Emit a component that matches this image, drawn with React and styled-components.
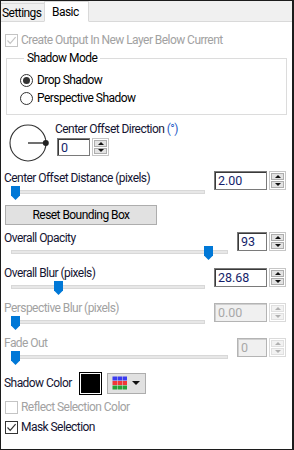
import React from "react";
import styled, { createGlobalStyle } from "styled-components";

const Global = createGlobalStyle`
  html, body { margin: 0; padding: 0; background: #ffffff; }
  * { box-sizing: border-box; }
`;

const FONT = `Roboto, "Liberation Sans", Arial, sans-serif`;
const TEXT = "#141432";
const DIS = "#a2a2a2";

const Window = styled.div`
  width: 294px;
  height: 450px;
  border: 1px solid #1c1c1c;
  border-right-width: 2px;
  background: #ffffff;
  font-family: ${FONT};
  font-size: 12px;
  letter-spacing: -0.55px;
  color: ${TEXT};
  display: flex;
  flex-direction: column;
  overflow: hidden;
`;

const TabBar = styled.div`
  height: 21px;
  flex: none;
  background: #f0f0f0;
  border-bottom: 1px solid #d9d9d9;
  display: flex;
  align-items: flex-end;
`;

const Tab = styled.div`
  height: ${(p) => (p.$active ? "21px" : "19px")};
  margin-bottom: -1px;
  padding: ${(p) => (p.$active ? "0 0 0 7px" : "0 0 0 1px")};
  width: ${(p) => p.$w}px;
  background: ${(p) => (p.$active ? "#ffffff" : "#f0f0f0")};
  border: 1px solid #d9d9d9;
  border-bottom: ${(p) => (p.$active ? "1px solid #ffffff" : "1px solid #d9d9d9")};
  border-left-width: ${(p) => (p.$active ? "1px" : "0")};
  margin-left: ${(p) => (p.$active ? "-1px" : "0")};
  display: flex;
  align-items: ${(p) => (p.$active ? "flex-start" : "center")};
  padding-top: ${(p) => (p.$active ? "3px" : "1px")};
  color: #000;
  white-space: nowrap;
`;

const Content = styled.div`
  flex: 1;
  padding: 0 6px 0 3px;
  display: flex;
  flex-direction: column;
`;

const CheckRow = styled.div`
  height: 16px;
  margin-top: ${(p) => p.$mt || 0}px;
  display: flex;
  align-items: center;
  gap: 3px;
  padding-left: 1px;
  color: ${(p) => (p.$disabled ? DIS : TEXT)};
`;

const Box = styled.span`
  width: 13px;
  height: 13px;
  border: 1px solid ${(p) => (p.$disabled ? "#c4c4c4" : "#333333")};
  background: #fff;
  display: flex;
  align-items: center;
  justify-content: center;
  flex: none;
`;

const Check = ({ checked, disabled }) => (
  <Box $disabled={disabled}>
    {checked && (
      <svg width="11" height="11" viewBox="0 0 11 11">
        <path
          d="M1.5 5.5 L4.2 8.3 L9.6 2.2"
          fill="none"
          stroke={disabled ? "#c4c4c4" : "#333"}
          strokeWidth="1.2"
        />
      </svg>
    )}
  </Box>
);

const Group = styled.fieldset`
  margin: 3px 0 0 2px;
  width: 281px;
  border: 1px solid #dcdcdc;
  padding: 6px 0 7px 13px;
  display: flex;
  flex-direction: column;
`;

const Legend = styled.legend`
  padding: 0 3px;
  margin-left: 4px;
  line-height: 14px;
  color: #000;
`;

const RadioRow = styled.div`
  height: 18px;
  display: flex;
  align-items: center;
  gap: 4px;
  color: #000;
`;

const RadioCircle = styled.span`
  width: 13px;
  height: 13px;
  border-radius: 50%;
  border: 1px solid #333;
  display: flex;
  align-items: center;
  justify-content: center;
  &::after {
    content: "";
    width: 7px;
    height: 7px;
    border-radius: 50%;
    background: ${(p) => (p.$on ? "#333" : "transparent")};
  }
`;

const DialRow = styled.div`
  margin-top: 7px;
  display: flex;
  align-items: flex-start;
  gap: 6px;
`;

const DialCol = styled.div`
  display: flex;
  flex-direction: column;
  gap: 2px;
`;

const Label = styled.div`
  line-height: 14px;
  height: 14px;
  white-space: nowrap;
  color: ${(p) => (p.$disabled ? DIS : TEXT)};
  grid-column: 1;
  grid-row: 1;
`;

const Blue = styled.span`
  color: #1e5bc6;
`;

const SpinWrap = styled.div`
  display: flex;
  align-items: stretch;
  gap: 2px;
  height: ${(p) => p.$h || 19}px;
  margin-top: ${(p) => p.$mt || 0}px;
  margin-left: ${(p) => p.$ml || 0}px;
  grid-column: 2;
  grid-row: 1 / span 2;
  align-self: start;
`;

const SpinField = styled.div`
  width: ${(p) => p.$w}px;
  border: 1px solid ${(p) => (p.$disabled ? "#b4b4b4" : "#7a7a7a")};
  box-shadow: inset 1px 1px 0 ${(p) => (p.$disabled ? "#cfcfcf" : "#3a3a3a")};
  background: ${(p) => (p.$disabled ? "#f0f0f0" : "#ffffff")};
  color: ${(p) => (p.$disabled ? "#a8a8a8" : "#141e6a")};
  font-size: 12.5px;
  letter-spacing: 0;
  padding-left: 3px;
  display: flex;
  align-items: center;
`;

const SpinBtns = styled.div`
  width: 17px;
  border: 1px solid ${(p) => (p.$disabled ? "#dadada" : "#c6c6c6")};
  display: flex;
  flex-direction: column;
  gap: 1px;
  padding: 1px;
`;

const SpinBtn = styled.div`
  flex: 1;
  background: ${(p) => (p.$disabled ? "#f2f2f2" : "#e3e3e3")};
  border: 1px solid ${(p) => (p.$disabled ? "#e0e0e0" : "#adadad")};
  display: flex;
  align-items: center;
  justify-content: center;
  &::after {
    content: "";
    border-left: 3px solid transparent;
    border-right: 3px solid transparent;
    ${(p) => (p.$up ? "border-bottom" : "border-top")}: 3px solid ${(p) =>
      p.$disabled ? "#b0b0b0" : "#111"};
  }
`;

const Spin = ({ value, w, disabled, h, mt, ml }) => (
  <SpinWrap $h={h} $mt={mt} $ml={ml}>
    <SpinField $w={w} $disabled={disabled}>
      {value}
    </SpinField>
    <SpinBtns $disabled={disabled}>
      <SpinBtn $up $disabled={disabled} />
      <SpinBtn $disabled={disabled} />
    </SpinBtns>
  </SpinWrap>
);

const Section = styled.div`
  display: grid;
  grid-template-columns: 1fr auto;
  grid-template-rows: 14px 16px;
  column-gap: 9px;
  height: ${(p) => p.$h || 35}px;
  margin-top: ${(p) => p.$mt || 0}px;
`;

const SliderArea = styled.div`
  grid-column: 1;
  grid-row: 2;
  margin-left: 7px;
  position: relative;
  height: 16px;
`;

const Track = styled.div`
  margin-top: 5px;
  height: 4px;
  background: #e7e7e7;
  border: 1px solid #d8d8d8;
`;

const Thumb = styled.svg`
  position: absolute;
  top: 1px;
`;

const Slider = ({ frac }) => (
  <SliderArea>
    <Track />
    <Thumb
      width="10"
      height="15"
      viewBox="0 0 10 15"
      style={{ left: `calc((100% - 9px) * ${frac})` }}
    >
      <polygon points="0,0 9,0 9,9.5 4.5,14 0,9.5" fill="#0078d7" />
    </Thumb>
  </SliderArea>
);

const Button = styled.div`
  margin: 4px 0 0 1px;
  width: 152px;
  height: 20px;
  background: #e1e1e1;
  border: 1px solid #adadad;
  display: flex;
  align-items: center;
  justify-content: center;
  color: #000;
`;

const ColorRow = styled.div`
  height: 24px;
  display: flex;
  align-items: center;
`;

const Swatch = styled.div`
  margin-left: 7px;
  width: 23px;
  height: 23px;
  border: 1px solid #000;
  padding: 1px;
  background: #fff;
  &::after {
    content: "";
    display: block;
    width: 100%;
    height: 100%;
    background: #000;
  }
`;

const PaletteBtn = styled.div`
  margin-left: 5px;
  width: 39px;
  height: 21px;
  background: #e1e1e1;
  border: 1px solid #adadad;
  display: flex;
  align-items: center;
  padding-left: 4px;
  gap: 4px;
`;

const Palette = () => (
  <svg width="16" height="14" viewBox="0 0 16 14">
    {[0, 1, 2].map((r) =>
      [0, 1, 2].map((c) => (
        <rect
          key={`${r}${c}`}
          x={c * 5 + 0.5}
          y={r * 4.5 + 0.5}
          width="4.5"
          height="4"
          fill={["#3b3bf0", "#f03838", "#26a336"][r]}
        />
      ))
    )}
  </svg>
);

const Caret = styled.span`
  border-left: 4px solid transparent;
  border-right: 4px solid transparent;
  border-top: 4px solid #111;
`;

export default function App() {
  return (
    <>
      <Global />
      <Window>
        <TabBar>
          <Tab $w={44}>Settings</Tab>
          <Tab $active $w={45}>Basic</Tab>
        </TabBar>
        <Content>
          <CheckRow $mt={10} $disabled>
            <Check checked disabled />
            Create Output In New Layer Below Current
          </CheckRow>
          <Group>
            <Legend>Shadow Mode</Legend>
            <RadioRow>
              <RadioCircle $on />
              Drop Shadow
            </RadioRow>
            <RadioRow>
              <RadioCircle />
              Perspective Shadow
            </RadioRow>
          </Group>
          <DialRow>
            <svg width="42" height="42" viewBox="0 0 42 42" style={{ marginLeft: 3 }}>
              <circle cx="21" cy="21" r="18" fill="none" stroke="#333" strokeWidth="1.1" />
              <line x1="21" y1="21" x2="39" y2="21" stroke="#333" strokeWidth="1.4" />
              <circle cx="38.8" cy="21" r="3" fill="#222" />
            </svg>
            <DialCol>
              <Label>
                Center Offset Direction <Blue>(°)</Blue>
              </Label>
              <Spin value="0" w={33} h={18} ml={2} />
            </DialCol>
          </DialRow>
          <Section $mt={7} $h={30}>
            <Label>Center Offset Distance (pixels)</Label>
            <Spin value="2.00" w={53} />
            <Slider frac={0} />
          </Section>
          <Button>Reset Bounding Box</Button>
          <Section $mt={6}>
            <Label>Overall Opacity</Label>
            <Spin value="93" w={30} mt={1} />
            <Slider frac={0.93} />
          </Section>
          <Section>
            <Label>Overall Blur (pixels)</Label>
            <Spin value="28.68" w={53} mt={2} />
            <Slider frac={0.23} />
          </Section>
          <Section>
            <Label $disabled>Perspective Blur (pixels)</Label>
            <Spin value="0.00" w={53} mt={2} disabled />
            <Slider frac={0} />
          </Section>
          <Section>
            <Label $disabled>Fade Out</Label>
            <Spin value="0" w={30} mt={2} disabled />
            <Slider frac={0} />
          </Section>
          <ColorRow>
            <Label>Shadow Color</Label>
            <Swatch />
            <PaletteBtn>
              <Palette />
              <Caret />
            </PaletteBtn>
          </ColorRow>
          <CheckRow $mt={4} $disabled>
            <Check disabled />
            Reflect Selection Color
          </CheckRow>
          <CheckRow $mt={4}>
            <Check checked />
            Mask Selection
          </CheckRow>
        </Content>
      </Window>
    </>
  );
}
